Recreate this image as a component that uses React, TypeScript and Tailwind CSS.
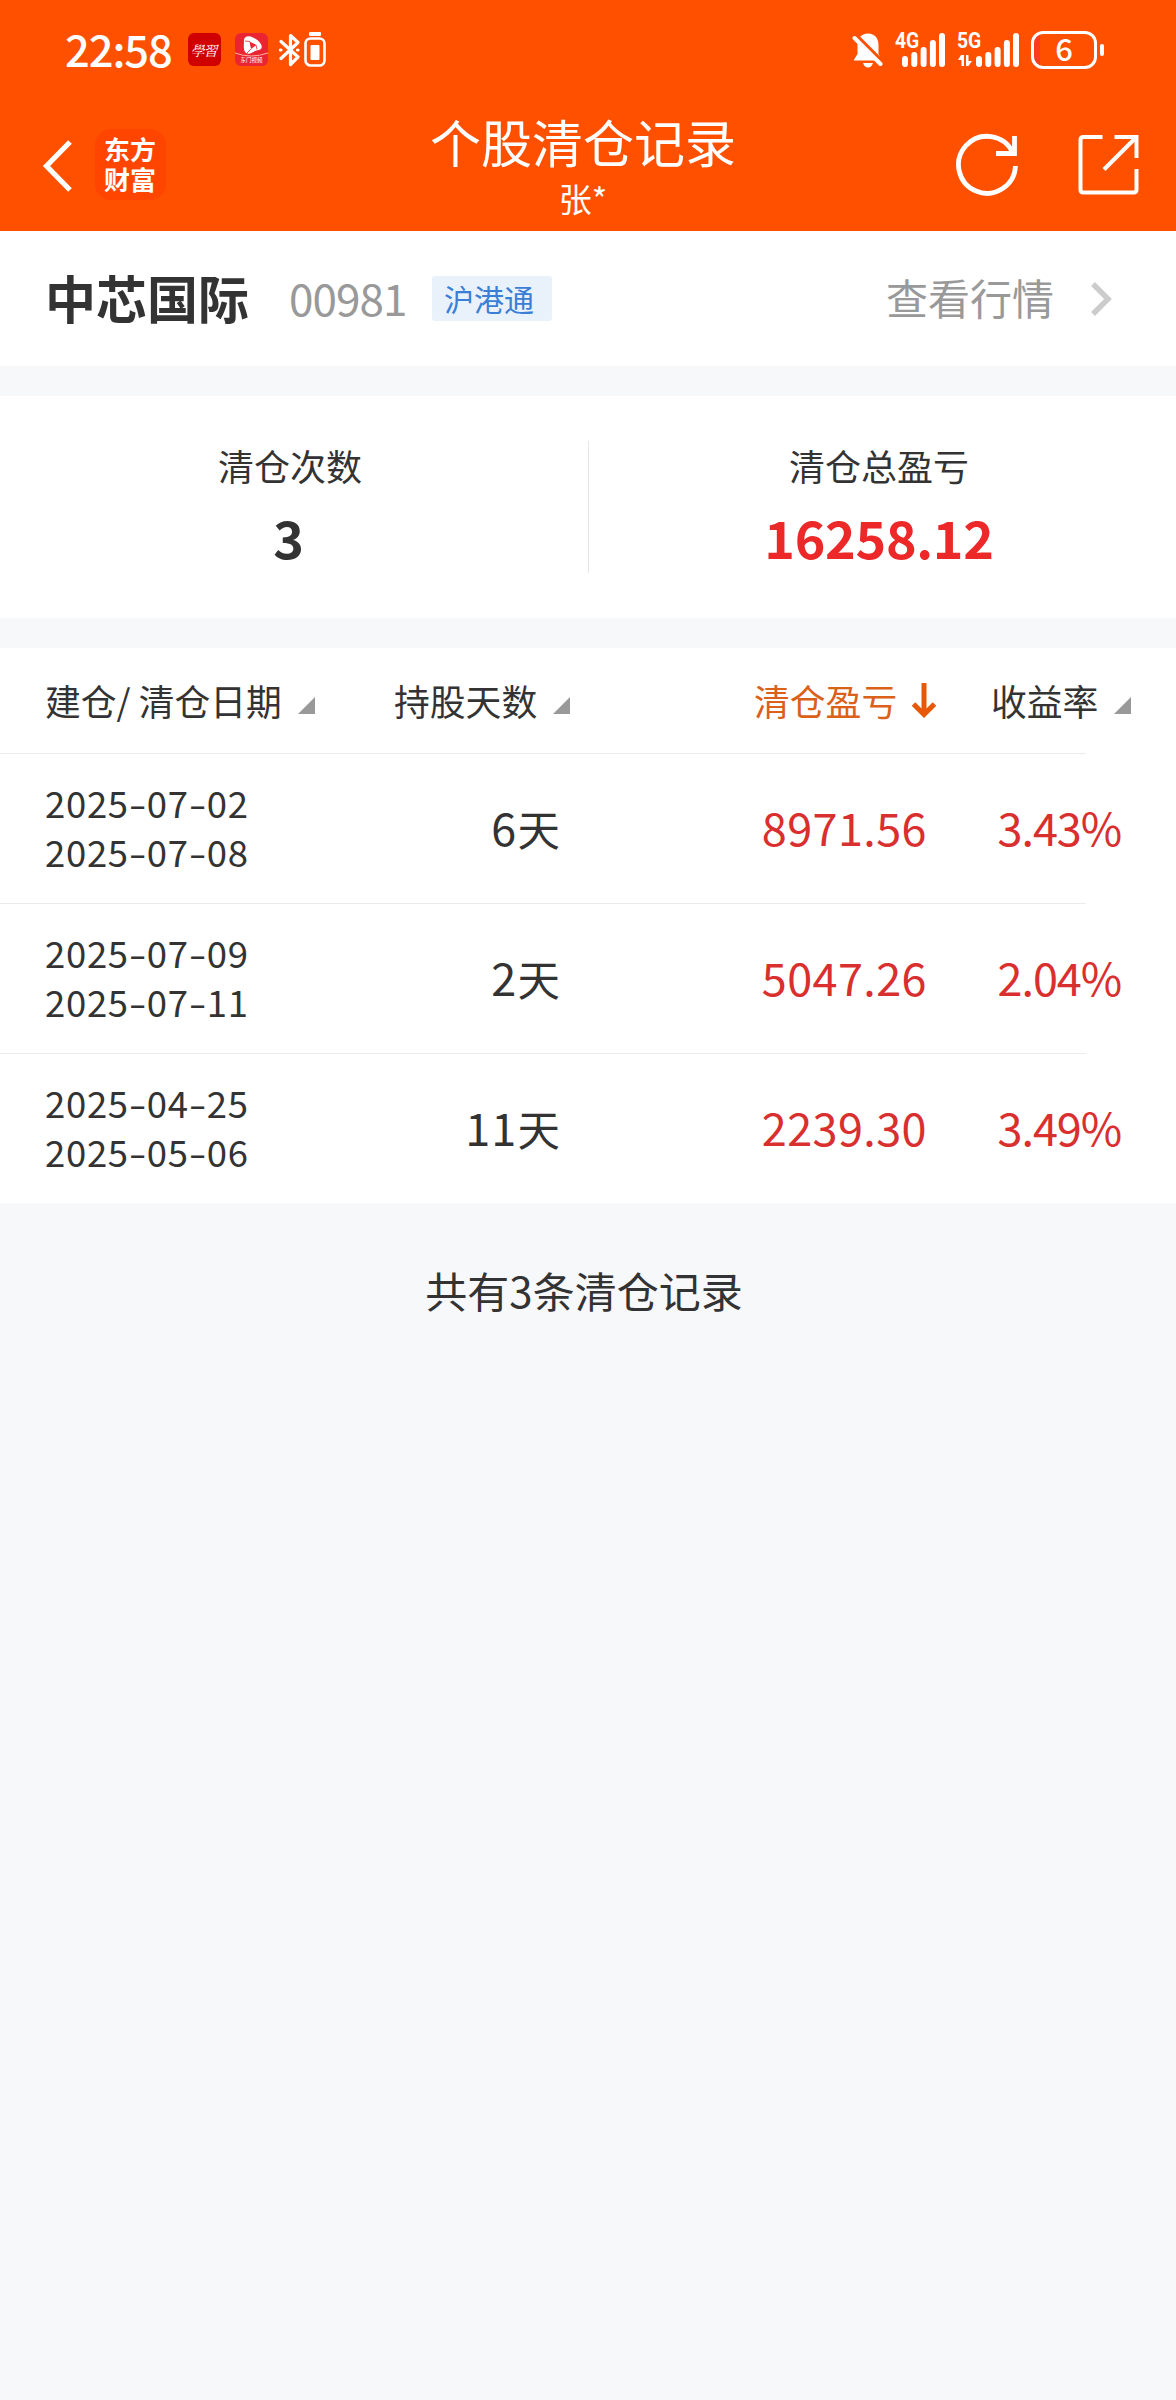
import React from 'react'
import clsx from 'clsx'

interface ClearRecord {
  open: string
  close: string
  days: number
  profit: string
  rate: string
}

const records: ClearRecord[] = [
  { open: '2025-07-02', close: '2025-07-08', days: 6, profit: '8971.56', rate: '3.43%' },
  { open: '2025-07-09', close: '2025-07-11', days: 2, profit: '5047.26', rate: '2.04%' },
  { open: '2025-04-25', close: '2025-05-06', days: 11, profit: '2239.30', rate: '3.49%' },
]

function SignalBars({ className }: { className?: string }) {
  return (
    <svg className={className} width="43" height="34" viewBox="0 0 43 34" fill="#fff">
      <rect x="0" y="23" width="6" height="11" rx="3" />
      <rect x="9.3" y="19" width="6" height="15" rx="3" />
      <rect x="18.6" y="14" width="6" height="20" rx="3" />
      <rect x="27.9" y="7" width="6" height="27" rx="3" />
      <rect x="37" y="0" width="6" height="34" rx="3" />
    </svg>
  )
}

function StatusBar() {
  return (
    <div className="flex h-[99px] items-start pl-[65px] pt-8 text-white">
      <span className="w-[123px] text-[43.5px] font-medium leading-[34px] tracking-[-1.1px]">22:58</span>

      {/* notification icons */}
      <div className="mt-px flex h-[33px] w-[33px] items-center justify-center rounded-[6px] bg-[#d00000]">
        <span className="-skew-x-12 font-['Noto_Serif_CJK_SC','Noto_Sans_CJK_SC',serif] text-[14px] leading-none tracking-[-1px]">
          學習
        </span>
      </div>
      <div className="ml-[14px] mt-px flex h-[33px] w-[33px] flex-col items-center rounded-[6px] bg-[#ea2531]">
        <svg width="33" height="24" viewBox="0 0 33 24" className="shrink-0">
          <path
            d="M9 7C9 3 14 2 18 4.500C22 6 28 11 26.500 15C25.500 17.500 22 17 20 18C17 20 13 22 10.500 19.500C8 17 9 11 9 7Z"
            fill="#fff"
          />
          <path d="M14.500 8.500L21.500 12L16 16Z" fill="#ea2531" />
          <path d="M10 8L15 8.500M22 16.500L21 12M12 20L16 16" stroke="#ea2531" strokeWidth="0.8" />
          <path d="M0 20Q16 26 33 20" stroke="#ffb0a0" strokeWidth="1" fill="none" />
        </svg>
        <span className="-mt-px text-[5.5px] leading-[8px]">东门视频</span>
      </div>
      <svg className="ml-[11px]" width="22" height="36" viewBox="0 0 22 36" fill="none" stroke="#fff" strokeWidth="3.200">
        <path d="M2 9.500L19 25L11.500 32.500V3.500L19 10.500L2 26.500" strokeLinejoin="round" strokeLinecap="round" />
        <path d="M1.500 18H2M18.500 18H19" strokeLinecap="round" />
      </svg>
      <svg className="ml-[3px]" width="22" height="36" viewBox="0 0 22 36" fill="none">
        <rect x="5" y="0" width="12" height="4" rx="1" fill="#fff" />
        <rect x="1.500" y="6.500" width="19" height="27" rx="5" stroke="#fff" strokeWidth="2.600" />
        <rect x="6.500" y="13" width="9" height="15" rx="1" fill="#fff" />
      </svg>

      {/* muted bell */}
      <svg className="ml-[526px]" width="32" height="36" viewBox="0 0 32 36">
        <path
          d="M16 1.500C23 1.500 26.500 6.500 26.500 13V22L30 28.500H1.500L5.500 22V13C5.500 6.500 9 1.500 16 1.500Z"
          fill="#fff"
        />
        <path d="M11 31H21Q19.500 35.500 16 35.500T11 31Z" fill="#fff" />
        <path d="M3 3L32 32" stroke="#ff5000" strokeWidth="5" />
        <path d="M2.500 6L28.500 32" stroke="#fff" strokeWidth="4" strokeLinecap="round" />
      </svg>

      <div className="relative ml-[18px] h-9 w-[46px]">
        <span className="absolute -left-[7px] top-0 origin-left scale-x-[0.88] font-['Roboto',sans-serif] text-[22px] font-bold leading-[18px]">
          4G
        </span>
        <SignalBars className="absolute left-0 top-px" />
      </div>
      <div className="relative ml-[10px] h-9 w-[64px]">
        <span className="absolute -left-px top-0 origin-left scale-x-[0.88] font-['Roboto',sans-serif] text-[22px] font-bold leading-[18px]">
          5G
        </span>
        <svg className="absolute left-0 top-[23px]" width="15" height="12" viewBox="0 0 15 12" fill="#fff">
          <path d="M3 0H6V11H3.500V5H0Z" />
          <path d="M8 0H10.500V6H14L10.500 11H8Z" />
        </svg>
        <SignalBars className="absolute left-[18px] top-px" />
      </div>

      <div className="-mt-px ml-[9px] flex items-center">
        <div className="flex h-[38px] w-[66px] items-center justify-center rounded-[12px] border-[3px] border-white bg-[linear-gradient(to_right,#ff3a20_6px,transparent_6px)]">
          <span className="-mt-[4px] text-[31px] font-medium leading-8">6</span>
        </div>
        <div className="ml-[3px] h-[12px] w-[4px] rounded-[2px] bg-white" />
      </div>
    </div>
  )
}

function TitleBar() {
  return (
    <div className="grid h-[132px] grid-cols-[400px_366px_1fr] text-white">
      <div className="flex items-start pl-[42px] pt-[30px]">
        <svg className="mt-[9px]" width="32" height="56" viewBox="0 0 32 56" fill="none" stroke="#fff" strokeWidth="5.200">
          <path d="M28 4L4.500 28L28 52" />
        </svg>
        <div className="ml-[21px] flex h-[71px] w-[71px] justify-center rounded-[16px] bg-[#ff4500] pt-[5px]">
          <span className="w-[53px] break-all text-[26px] font-bold leading-[30px]">东方财富</span>
        </div>
      </div>

      <div className="flex flex-col items-center pt-[15px]">
        <h1 className="text-[51px] leading-[54px]">个股清仓记录</h1>
        <p className="mt-[10px] text-[33px] leading-10">张*</p>
      </div>

      <div className="flex pl-[188px] pt-[34px]">
        <svg width="66" height="66" viewBox="0 0 66 66" fill="none" stroke="#fff" strokeWidth="4.800">
          <path d="M61.500 33A28.500 28.500 0 1 1 58.500 19" />
          <path d="M60.500 3V20.500H42" />
        </svg>
        <svg className="ml-[57px]" width="64" height="64" viewBox="0 0 64 64" fill="none" stroke="#fff" strokeWidth="4">
          <path d="M25.500 4H6.500Q3.500 4 3.500 7V56.500Q3.500 59.500 6.500 59.500H56.500Q59.500 59.500 59.500 56.500V36" />
          <path d="M37.500 4H59.500V25" />
          <path d="M27 36.500L59.500 4" />
        </svg>
      </div>
    </div>
  )
}

function StockRow() {
  return (
    <div className="flex h-[135px] items-center bg-white pl-[45px] pr-[62px]">
      <span className="-mt-[2px] text-[51px] font-bold leading-none text-[#333]">中芯国际</span>
      <span className="-mt-[4px] ml-[40px] w-[143px] text-[44px] leading-none tracking-[-0.9px] text-[#999]">00981</span>
      <span className="h-[45px] w-[120px] rounded-[3px] bg-[#e9f1fb] pl-[12px] text-[30px] leading-[44px] text-[#3a7fd5]">
        沪港通
      </span>
      <span className="-mt-[3px] ml-auto text-[42px] leading-none text-[#999]">查看行情</span>
      <svg className="ml-[36px]" width="24" height="36" viewBox="0 0 24 36" fill="none" stroke="#ccc" strokeWidth="5.500">
        <path d="M3 3L18 18L3 33" />
      </svg>
    </div>
  )
}

function Summary() {
  return (
    <div className="mt-[30px] flex h-[222px] bg-white pt-[45px] text-center text-[#333]">
      <div className="h-[132px] w-[588px] pr-2">
        <div className="text-[36px] leading-[48px]">清仓次数</div>
        <div className="mt-[18px] pr-[3px] text-[52px] font-bold leading-[60px]">3</div>
      </div>
      <div className="h-[132px] w-px bg-[#e6e6e6]" />
      <div className="h-[132px] flex-1 pr-[7px]">
        <div className="text-[36px] leading-[48px]">清仓总盈亏</div>
        <div className="mt-[18px] text-[52px] font-bold leading-[60px] tracking-[-0.3px] text-[#ec2828]">16258.12</div>
      </div>
    </div>
  )
}

function SortLabel({ text, active }: { text: string; active?: boolean }) {
  return (
    <div className={clsx('flex text-[35.8px] leading-[48px]', active ? 'text-[#db6018]' : 'text-[#333]')}>
      <span className="whitespace-pre">{text}</span>
      {active ? (
        <svg className="ml-[14px] mt-[7px]" width="26" height="36" viewBox="0 0 26 36" fill="none" stroke="#e8580a" strokeWidth="5">
          <path d="M13 0V31M2.500 21L13 31.500L23.500 21" />
        </svg>
      ) : (
        <svg className="ml-[16px] mt-[21px]" width="17" height="17" viewBox="0 0 17 17" fill="#999">
          <path d="M17 0V17H0Z" />
        </svg>
      )}
    </div>
  )
}

function DateText({ value }: { value: string }) {
  const [y, m, d] = value.split('-')
  const dash = <span className="inline-block w-[18px] scale-x-[1.4] text-center">-</span>
  return (
    <div className="h-[49px] whitespace-nowrap text-[36.5px] leading-[49px] tracking-[0.7px]">
      {y}
      {dash}
      {m}
      {dash}
      {d}
    </div>
  )
}

function Divider() {
  return <div className="h-px w-[1086px] bg-[#ebebeb]" />
}

function RecordTable() {
  return (
    <div className="mt-[30px] h-[555px] bg-white">
      <div className="grid h-[105px] grid-cols-[349px_360px_237px_1fr] pl-[45px] pt-[28px]">
        <SortLabel text="建仓/ 清仓日期" />
        <SortLabel text="持股天数" />
        <SortLabel text="清仓盈亏" active />
        <SortLabel text="收益率" />
      </div>
      {records.map((r) => (
        <div key={r.open} className="h-[150px]">
          <Divider />
          <div className="grid h-[149px] grid-cols-[300px_215px_367px_194px] items-center pl-[45px] text-[#333]">
            <div className="-mt-1">
              <DateText value={r.open} />
              <DateText value={r.close} />
            </div>
            <div className="-mt-[3px] flex items-baseline justify-end leading-[60px]">
              <span className="text-[45px] tracking-[1.2px]">{r.days}</span>
              <span className="text-[42.500px]">天</span>
            </div>
            <div className="-mt-[3px] text-right text-[45px] leading-[60px] tracking-[0.4px] text-[#d92f2f]">{r.profit}</div>
            <div className="-mt-[3px] text-right text-[45px] leading-[60px] tracking-[-1.1px] text-[#d92f2f]">{r.rate}</div>
          </div>
        </div>
      ))}
    </div>
  )
}

export default function App() {
  return (
    <div className="h-[2400px] w-[1176px] overflow-hidden bg-[#f7f8fa] font-['Noto_Sans_CJK_SC',sans-serif]">
      <header className="bg-[#ff5000]">
        <StatusBar />
        <TitleBar />
      </header>
      <StockRow />
      <Summary />
      <RecordTable />
      <p className="mt-[59px] pr-[8px] text-center text-[42px] leading-[56px] text-[#333]">
        共有3条清仓记录
      </p>
    </div>
  )
}
